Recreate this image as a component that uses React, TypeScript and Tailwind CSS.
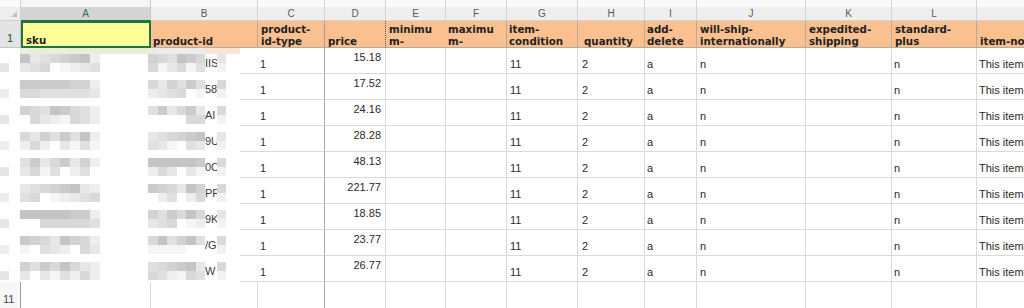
import React from "react";

type Col = { key: string; w: string; head: string[]; hpl: string; dpl: string };

// column widths read off the sheet grid (row header is 21px)
const COLS: Col[] = [
  { key: "A", w: "w-[130px]", head: ["sku"], hpl: "pl-[3px]", dpl: "pl-[3px]" },
  { key: "B", w: "w-[107px]", head: ["product-id"], hpl: "pl-[2px]", dpl: "pl-[3px]" },
  { key: "C", w: "w-[67px]", head: ["product-", "id-type"], hpl: "pl-[3px]", dpl: "pl-[2px]" },
  { key: "D", w: "w-[61px]", head: ["price"], hpl: "pl-[3px]", dpl: "pl-[3px]" },
  { key: "E", w: "w-[60px]", head: ["minimu", "m-"], hpl: "pl-[3px]", dpl: "pl-[3px]" },
  { key: "F", w: "w-[61px]", head: ["maximu", "m-"], hpl: "pl-[2px]", dpl: "pl-[3px]" },
  { key: "G", w: "w-[71px]", head: ["item-", "condition"], hpl: "pl-[2px]", dpl: "pl-[3px]" },
  { key: "H", w: "w-[67px]", head: ["quantity"], hpl: "pl-[6px]", dpl: "pl-[4px]" },
  { key: "I", w: "w-[52px]", head: ["add-", "delete"], hpl: "pl-[2px]", dpl: "pl-[2px]" },
  { key: "J", w: "w-[109px]", head: ["will-ship-", "internationally"], hpl: "pl-[3px]", dpl: "pl-[3px]" },
  { key: "K", w: "w-[86px]", head: ["expedited-", "shipping"], hpl: "pl-[3px]", dpl: "pl-[3px]" },
  { key: "L", w: "w-[85px]", head: ["standard-", "plus"], hpl: "pl-[3px]", dpl: "pl-[2px]" },
  { key: "M", w: "w-[120px]", head: ["item-note"], hpl: "pl-[3px]", dpl: "pl-[2px]" },
];

const PRICES = ["15.18", "17.52", "24.16", "28.28", "48.13", "221.77", "18.85", "23.77", "26.77"];
const TAILS = ["IIS", "58", "AI", "9U", "0C", "PF", "9K", "/G", "W"];

const SHADES = [
  "bg-[#c4c4c4]",
  "bg-[#cbcbcb]",
  "bg-[#d2d2d2]",
  "bg-[#d9d9d9]",
  "bg-[#e0e0e0]",
  "bg-[#e7e7e7]",
  "bg-[#eeeeee]",
  "bg-[#f5f5f5]",
  "bg-white",
];

const GRID = "border-[#dadada]";
const GREEN = "border-[#217346]";

function valueFor(key: string, row: number) {
  switch (key) {
    case "C":
      return "1";
    case "D":
      return PRICES[row];
    case "G":
      return "11";
    case "H":
      return "2";
    case "I":
      return "a";
    case "J":
    case "L":
      return "n";
    case "M":
      return "This item";
    default:
      return "";
  }
}

function pick(row: number, col: number, stripe: number) {
  const h = (row * 37 + col * 17 + stripe * 11 + ((row * col) % 5) * 7) % 6;
  return stripe === 0 ? SHADES[h] : SHADES[Math.min(8, h + 3)];
}

function Block({ w, top, bottom }: { w: string; top: string; bottom: string }) {
  return (
    <div className={`flex shrink-0 flex-col ${w}`}>
      <div className={`h-[9px] ${top}`} />
      <div className={`h-[9px] ${bottom}`} />
    </div>
  );
}

// pixelated stand-in for the redacted sku / product-id cells
function MaskedCells({ row }: { row: number }) {
  const aCols = Array.from({ length: 8 }, (_, i) => i);
  const bWidths = ["w-[10px]", "w-[9px]", "w-[10px]", "w-[9px]", "w-[10px]", "w-[9px]"];
  return (
    <div className="flex h-[26px] w-[258px] shrink-0">
      <div className="flex w-[240px] shrink-0 flex-col bg-white">
        {row === 0 ? (
          <div className="flex h-[6px]">
            <div className="w-[20px]" />
            <div className="w-[130px] bg-[#e9eddc]" />
            <div className="w-[55px] bg-[#ececec]" />
            <div className="w-[35px] bg-[#f7e6d6]" />
          </div>
        ) : (
          <div className="h-[6px]" />
        )}
        <div className="flex h-[18px]">
          <Block w="w-[9px]" top="bg-white" bottom={row % 2 ? "bg-[#ededed]" : "bg-[#e6e6e6]"} />
          <div className="w-[11px] shrink-0" />
          {aCols.map((c) => (
            <Block key={c} w="w-[10px]" top={c === 7 ? SHADES[6] : pick(row, c, 0)} bottom={pick(row, c + 3, 1)} />
          ))}
          <div className="w-[48px] shrink-0" />
          {bWidths.map((w, c) => (
            <Block key={c} w={w} top={pick(row + 2, c, 0)} bottom={pick(row + 4, c + 1, 1)} />
          ))}
          <div className="flex w-[12px] shrink-0 items-center overflow-hidden whitespace-nowrap text-[11px] leading-[13px] text-[#3a3a3a]">
            {TAILS[row]}
          </div>
          <Block w="w-[9px]" top={row % 3 ? "bg-[#d9d9d9]" : "bg-[#e6e6e6]"} bottom="bg-[#f2f2f2]" />
        </div>
      </div>
      <div className={`w-[18px] shrink-0 border-b ${GRID}`} />
    </div>
  );
}

function LetterRow() {
  return (
    <div className="flex h-[21px]">
      <div className="flex w-[21px] shrink-0 items-end justify-end border-r border-b border-[#d0d0d0] bg-linear-to-b from-[#fafafa] from-35% to-[#eeeeee] to-35% pr-[3px] pb-[3px]">
        <svg width="6" height="6" viewBox="0 0 6 6">
          <path d="M6 0 L6 6 L0 6 Z" fill="#c2c2c2" />
        </svg>
      </div>
      {COLS.map((c) => (
        <div
          key={c.key}
          className={`flex shrink-0 items-end justify-center border-r border-b pb-[1px] text-[10px] leading-[10px] ${c.w} ${
            c.key === "A"
              ? "border-r-[#c8c8c8] border-b-[#217346] bg-linear-to-b from-[#f6f6f6] from-35% to-[#d4d4d4] to-35% text-[#217346]"
              : "border-[#d4d4d4] bg-linear-to-b from-[#fafafa] from-35% to-[#efefef] to-35% text-[#5a5a5a]"
          }`}
        >
          {/* M's letter sits past the right edge of the window */}
          {c.key === "M" ? "" : c.key}
        </div>
      ))}
    </div>
  );
}

function HeaderRow() {
  return (
    <div className="flex h-[27px]">
      <div className="flex w-[21px] shrink-0 items-end justify-center border-r border-b border-[#c6c6c6] bg-[#e4e4e4] pb-[2px] text-[11px] leading-[13px] text-[#1d4f2f]">
        1
      </div>
      {COLS.map((c) => {
        let edge = "border-r border-b border-[#b8aa9d]";
        if (c.key === "A") edge = `border-2 ${GREEN} bg-[#ffff99]`;
        if (c.key === "C") edge = "border-r border-b border-r-[#9f9f9f] border-b-[#b8aa9d]";
        if (c.key === "D") edge = "border-r border-b border-r-[#555] [border-right-style:dotted] border-b-[#b8aa9d]";
        if (c.key === "E") edge = "border-r border-b border-r-[#fac090] border-b-[#b8aa9d]";
        return (
          <div
            key={c.key}
            className={`flex shrink-0 flex-col justify-end overflow-hidden whitespace-nowrap font-['DejaVu_Sans',Verdana,sans-serif] text-[10.25px] leading-[12px] font-bold text-[#222] ${c.w} ${c.hpl} ${
              c.key === "A" ? "" : "bg-[#fac090]"
            } ${edge}`}
          >
            {c.head.map((line) => (
              <span key={line}>{line}</span>
            ))}
          </div>
        );
      })}
    </div>
  );
}

function DataRow({ row }: { row: number }) {
  return (
    <div className="flex h-[26px]">
      <MaskedCells row={row} />
      {COLS.slice(2).map((c) => {
        const isPrice = c.key === "D";
        return (
          <div
            key={c.key}
            className={`flex shrink-0 items-end overflow-hidden whitespace-nowrap border-r border-b text-[11px] leading-[13px] text-[#2b2b2b] ${c.w} ${
              c.key === "C" ? "border-r-[#a9a9a9] border-b-[#dadada]" : GRID
            } ${isPrice ? "justify-end pr-[4px] pb-[9px]" : `pb-[2px] ${c.dpl}`}`}
          >
            {valueFor(c.key, row)}
          </div>
        );
      })}
    </div>
  );
}

function LastRow() {
  return (
    <div className="flex h-[26px]">
      <div className="flex w-[21px] shrink-0 items-end border-r border-r-[#9c9c9c] bg-[#f7f7f7] pb-[2px] pl-[3px] text-[11px] leading-[13px] text-[#444]">
        11
      </div>
      {COLS.map((c) => (
        <div
          key={c.key}
          className={`shrink-0 border-r ${c.w} ${c.key === "C" ? "border-r-[#a9a9a9]" : GRID}`}
        />
      ))}
    </div>
  );
}

export default function App() {
  return (
    <div className="h-[308px] w-[1024px] overflow-hidden bg-white font-['Liberation_Sans',Arial,sans-serif]">
      <LetterRow />
      <HeaderRow />
      {PRICES.map((_, i) => (
        <DataRow key={i} row={i} />
      ))}
      <LastRow />
    </div>
  );
}
